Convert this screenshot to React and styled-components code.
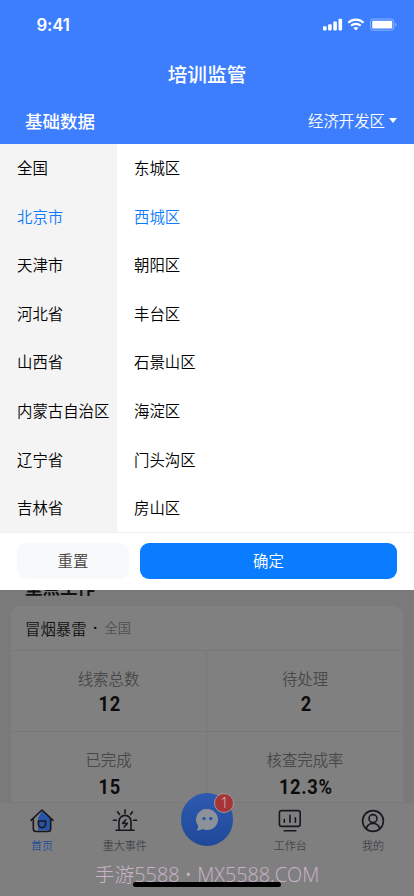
import React from 'react'
import styled, { createGlobalStyle } from 'styled-components'

const provinces = [
  '全国',
  '北京市',
  '天津市',
  '河北省',
  '山西省',
  '内蒙古自治区',
  '辽宁省',
  '吉林省',
]

const districts = [
  '东城区',
  '西城区',
  '朝阳区',
  '丰台区',
  '石景山区',
  '海淀区',
  '门头沟区',
  '房山区',
]

const stats = [
  { id: 1, label: '线索总数', value: '12' },
  { id: 2, label: '待处理', value: '2' },
  { id: 3, label: '已完成', value: '15' },
  { id: 4, label: '核查完成率', value: '12.3%' },
]

const StatusIcons = () => (
  <svg width="76" height="14" viewBox="0 0 76 14" fill="#fff">
    <rect x="0" y="8.2" width="3.6" height="4.2" rx="0.8" />
    <rect x="5.1" y="6.2" width="3.6" height="6.2" rx="0.8" />
    <rect x="10.3" y="3.6" width="3.6" height="8.8" rx="0.8" />
    <rect x="15.5" y="0.8" width="3.6" height="11.6" rx="0.8" />
    <g fill="none" stroke="#fff" strokeWidth="2.2">
      <path d="M25.3 4.8a10.9 10.9 0 0 1 15.2 0" />
      <path d="M28.1 7.8a6.9 6.9 0 0 1 9.6 0" />
    </g>
    <path d="M30.4 10.1a3.8 3.8 0 0 1 5 0l-2.5 2.5z" />
    <rect
      x="47.5"
      y="1"
      width="23.2"
      height="11.2"
      rx="2.8"
      fill="none"
      stroke="#fff"
      strokeOpacity="0.4"
    />
    <rect x="49.2" y="2.7" width="20" height="7.8" rx="1.3" />
    <path d="M72.2 4.8v3.8q1.3-.5 1.3-1.9t-1.3-1.9z" fillOpacity="0.4" />
  </svg>
)

const HomeIcon = () => (
  <svg width="26" height="26" viewBox="0 0 26 26" fill="none">
    <path d="M13.5 2.5L21.5 10v12.5H9V10z" fill="#2853a8" />
    <g
      stroke="#17181e"
      strokeWidth="1.6"
      strokeLinecap="round"
      strokeLinejoin="round"
    >
      <path d="M2 12.4L13 2l11 10.4" />
      <path d="M4.3 10.5v10.2a2.8 2.8 0 0 0 2.8 2.8h11.8a2.8 2.8 0 0 0 2.8-2.8V10.5" />
      <path d="M9.4 13h7.2v3a3.6 3.6 0 0 1-7.2 0z" />
    </g>
  </svg>
)

const AlarmIcon = () => (
  <svg
    width="26"
    height="26"
    viewBox="0 0 26 26"
    fill="none"
    stroke="#17181e"
    strokeWidth="1.6"
    strokeLinecap="round"
    strokeLinejoin="round"
  >
    <path d="M4 22.3h18M7 22v-8.6a6 6 0 0 1 12 0V22" />
    <path d="M13 1.8v3.4M5.5 3.8l2.1 2.6M20.5 3.8l-2.1 2.6M1.4 12.2h3M21.6 12.2h3" />
    <path d="M13.8 11.8l-3.2 3.6h4.8L12.2 19" />
  </svg>
)

const WorkbenchIcon = () => (
  <svg
    width="26"
    height="26"
    viewBox="0 0 26 26"
    fill="none"
    stroke="#17181e"
    strokeWidth="1.6"
    strokeLinecap="round"
  >
    <rect x="2.4" y="2.6" width="20.8" height="15.8" rx="2.2" />
    <path d="M7.3 11.5v2.8M13 7.2v7.1M18.4 9.7v4.6M7.2 22.8h11.6" />
  </svg>
)

const MineIcon = () => (
  <svg
    width="26"
    height="26"
    viewBox="0 0 26 26"
    fill="none"
    stroke="#17181e"
    strokeWidth="1.6"
  >
    <circle cx="13" cy="13" r="10.4" />
    <circle cx="13" cy="10.6" r="4" />
    <path d="M6.2 20.8a7 7 0 0 1 13.6 0" />
  </svg>
)

const ChatIcon = () => (
  <svg width="26" height="26" viewBox="0 0 26 26">
    <path
      d="M13.2 2a10.8 10.5 0 1 1-4.6 20q-2.6 1.5-5 1.4-1-.1-.1-1.3.9-1.5.6-3.3A10.6 10.6 0 0 1 13.2 2z"
      fill="#8d9199"
    />
    <g fill="#2853a8">
      <circle cx="10" cy="11.6" r="1.7" />
      <circle cx="16.8" cy="11.6" r="1.7" />
    </g>
  </svg>
)

const App = () => {
  return (
    <Phone>
      <GlobalStyle />
      <Header>
        <StatusBar>
          <time>9:41</time>
          <StatusIcons />
        </StatusBar>
        <Title>培训监管</Title>
        <SectionBar>
          <h2>基础数据</h2>
          <AreaButton>
            经济开发区
            <Caret />
          </AreaButton>
        </SectionBar>
      </Header>

      <Picker>
        <Columns>
          <Column $side>
            {provinces.map((name, i) => (
              <Option key={name} $active={i === 1}>
                {name}
              </Option>
            ))}
          </Column>
          <Column>
            {districts.map((name, i) => (
              <Option key={name} $active={i === 1}>
                {name}
              </Option>
            ))}
          </Column>
        </Columns>
        <Actions>
          <Button>重置</Button>
          <Button $primary>确定</Button>
        </Actions>
      </Picker>

      <Content>
        <h2>重点工作</h2>
        <Card>
          <CardHead>
            冒烟暴雷<b>·</b>
            <small>全国</small>
          </CardHead>
          <Stats>
            {stats.map(({ id, label, value }) => (
              <Stat key={id}>
                <span>{label}</span>
                <strong>{value}</strong>
              </Stat>
            ))}
          </Stats>
        </Card>
      </Content>

      <TabBar>
        <Tab $active>
          <HomeIcon />
          首页
        </Tab>
        <Tab>
          <AlarmIcon />
          重大事件
        </Tab>
        <ChatButton>
          <ChatIcon />
          <Badge>1</Badge>
        </ChatButton>
        <Tab>
          <WorkbenchIcon />
          工作台
        </Tab>
        <Tab>
          <MineIcon />
          我的
        </Tab>
        <HomeIndicator />
        <Watermark>手游5588 • MX5588.COM</Watermark>
      </TabBar>
    </Phone>
  )
}

export default App

const GlobalStyle = createGlobalStyle`
  * {
    box-sizing: border-box;
    margin: 0;
    padding: 0;
  }
  body {
    font-family: 'Noto Sans CJK SC', sans-serif;
    font-weight: 350;
    background: #fff;
  }
  svg {
    display: block;
    flex-shrink: 0;
  }
`

const Phone = styled.div`
  width: 414px;
  height: 896px;
  display: flex;
  flex-direction: column;
  overflow: hidden;
`

const Header = styled.header`
  height: 144px;
  flex-shrink: 0;
  color: #fff;
  background: #3d7eff;
`

const StatusBar = styled.div`
  height: 48px;
  padding: 1px 15px 0 36.5px;
  display: flex;
  align-items: center;
  justify-content: space-between;

  time {
    font: 600 16.8px/20px Inter, sans-serif;
    letter-spacing: -0.2px;
  }
`

const Title = styled.h1`
  height: 52px;
  font-size: 19.7px;
  font-weight: 500;
  line-height: 52px;
  text-align: center;
`

const SectionBar = styled.div`
  height: 41px;
  padding: 0 17px 0 25px;
  display: flex;
  align-items: center;
  justify-content: space-between;

  h2 {
    font-size: 17.5px;
    font-weight: 500;
  }
`

const AreaButton = styled.button`
  display: flex;
  align-items: center;
  gap: 4px;
  padding-bottom: 1px;
  border: 0;
  background: none;
  color: #fff;
  font: 350 15.4px/24px 'Noto Sans CJK SC', sans-serif;
`

const Caret = styled.i`
  border: 4px solid transparent;
  border-top: 5px solid #fff;
  border-bottom: 0;
`

const Picker = styled.section`
  position: relative;
  z-index: 1;
  height: 445.5px;
  flex-shrink: 0;
  background: #fff;
`

const Columns = styled.div`
  height: 389px;
  display: flex;
  border-bottom: 1px solid #f0f0f0;
`

const Column = styled.ul`
  width: ${({ $side }) => ($side ? '117px' : '297px')};
  padding-left: 17px;
  list-style: none;
  background: ${({ $side }) => ($side ? '#f4f4f4' : '#fff')};
`

const Option = styled.li`
  height: 48.6px;
  font-size: 15.4px;
  line-height: 47.6px;
  white-space: nowrap;
  color: ${({ $active }) => ($active ? '#0a7cff' : '#000')};
`

const Actions = styled.div`
  padding: 10px 17px 11px;
  display: flex;
  gap: 11px;
`

const Button = styled.button`
  width: ${({ $primary }) => ($primary ? '257px' : '112px')};
  height: 35.5px;
  border: 0;
  border-radius: 9px;
  font: 350 15.4px/35px 'Noto Sans CJK SC', sans-serif;
  color: ${({ $primary }) => ($primary ? '#fff' : '#444')};
  background: ${({ $primary }) => ($primary ? '#0a7cff' : '#f8f9fb')};
`

const Content = styled.main`
  height: 213.5px;
  flex-shrink: 0;
  background: #7a7a7a;

  h2 {
    height: 30.5px;
    margin: -14px 0 0 25px;
    font-size: 17.5px;
    font-weight: 700;
    line-height: 21px;
    color: #111;
  }
`

const Card = styled.div`
  height: 197px;
  margin: 0 11px;
  border-radius: 9px 9px 0 0;
  background: #808080;
`

const CardHead = styled.div`
  height: 45px;
  padding-left: 14px;
  display: flex;
  border-bottom: 1px solid #787878;
  font-size: 15.4px;
  line-height: 44px;
  color: #111;

  b {
    width: 18px;
    font-family: 'Liberation Sans', sans-serif;
    text-align: center;
  }
  small {
    font-size: 13.2px;
    line-height: 43px;
    color: #4f4f4f;
  }
`

const Stats = styled.div`
  display: grid;
  grid-template-columns: 196px 196px;
  grid-template-rows: 81px 71px;
`

const Stat = styled.div`
  padding-top: 15px;
  display: flex;
  flex-direction: column;
  align-items: center;
  border-bottom: 1px solid #787878;

  &:nth-child(odd) {
    border-right: 1px solid #787878;
  }
  span {
    font-size: 15.4px;
    line-height: 24px;
    color: #484848;
  }
  strong {
    padding-left: 2px;
    font: 700 21px/28px Roboto, sans-serif;
    letter-spacing: 0.8px;
    color: #0c0c0c;
    transform: scaleX(0.87);
  }
  &:nth-child(n + 3) strong {
    padding-top: 2px;
  }
`

const TabBar = styled.nav`
  position: relative;
  height: 93px;
  flex-shrink: 0;
  display: flex;
  background: #7f7f7f;
`

const Tab = styled.div`
  width: 83px;
  padding: 5px 0 0 1px;
  display: flex;
  flex-direction: column;
  align-items: center;
  gap: 3px;
  font-size: 11px;
  line-height: 16px;
  color: ${({ $active }) => ($active ? '#254c9b' : '#43464a')};
`

const ChatButton = styled.div`
  position: relative;
  width: 53px;
  height: 53px;
  margin: -10px 15px 0;
  display: flex;
  align-items: center;
  justify-content: center;
  border-radius: 50%;
  background: linear-gradient(#2d5bb0, #204899);
`

const Badge = styled.span`
  position: absolute;
  top: 0;
  right: -1px;
  width: 20px;
  height: 20px;
  border: 1px solid #999;
  border-radius: 50%;
  font-family: 'Noto Sans', sans-serif;
  font-size: 14px;
  line-height: 18px;
  text-align: center;
  color: #c4bcbc;
  background: #a83438;
`

const HomeIndicator = styled.i`
  position: absolute;
  left: 133px;
  bottom: 9px;
  width: 148px;
  height: 5px;
  border-radius: 3px;
  background: #000;
`

const Watermark = styled.div`
  position: absolute;
  top: 57px;
  left: 0;
  width: 100%;
  font: 300 19.8px/29px 'Open Sans', 'Noto Sans CJK SC', sans-serif;
  text-align: center;
  white-space: nowrap;
  color: #c9b3c9;
`
